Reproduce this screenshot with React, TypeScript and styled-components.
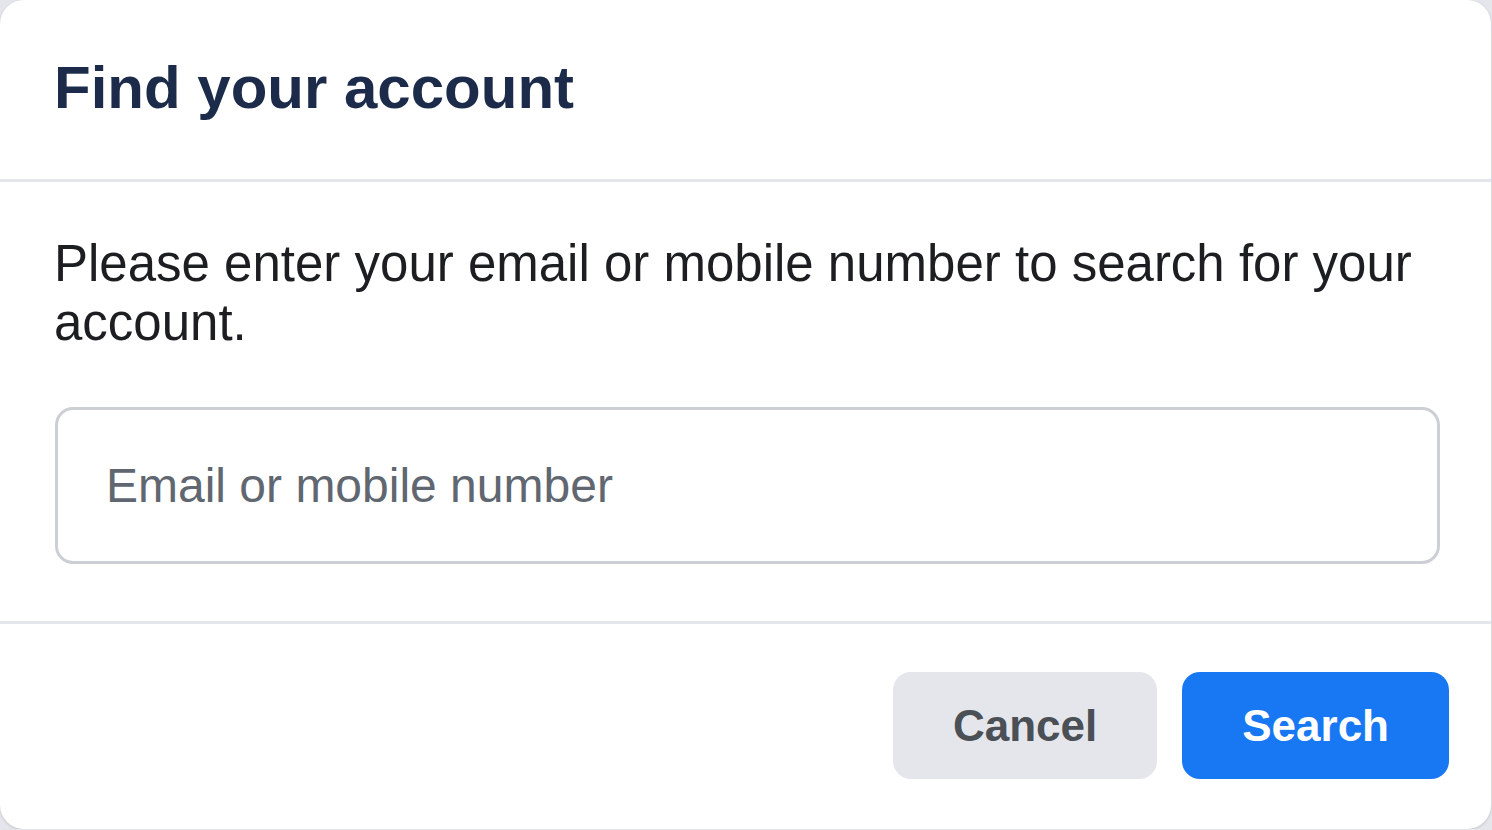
import React from "react";
import styled, { createGlobalStyle } from "styled-components";

const GlobalStyle = createGlobalStyle`
  html, body {
    margin: 0;
    padding: 0;
    background: #e4e6eb;
  }
  body {
    font-family: "Liberation Sans", Arial, Helvetica, sans-serif;
    -webkit-font-smoothing: antialiased;
  }
  * { box-sizing: border-box; }
`;

const Card = styled.div`
  width: 1491px;
  height: 829px;
  background: #ffffff;
  border-radius: 24px;
  box-shadow: 0 1px 3px rgba(0, 0, 0, 0.15);
  display: flex;
  flex-direction: column;
  overflow: hidden;
`;

const Header = styled.header`
  padding: 52px 51px 55px 54px;
  border-bottom: 3px solid #e4e6eb;
`;

const Title = styled.h2`
  margin: 0;
  font-size: 60px;
  line-height: 72px;
  font-weight: 700;
  color: #1c2b4a;
`;

const Body = styled.div`
  padding: 52px 51px 57px 54px;
  border-bottom: 3px solid #e4e6eb;
  display: flex;
  flex-direction: column;
  gap: 55px;
`;

const Description = styled.p`
  margin: 0;
  font-size: 51px;
  line-height: 59px;
  color: #1c1e21;
`;

const Input = styled.input`
  margin-left: 1px;
  height: 157px;
  border: 3px solid #ccd0d5;
  border-radius: 18px;
  padding: 0 48px;
  font-family: inherit;
  font-size: 48px;
  color: #1c1e21;
  outline: none;
  background: #ffffff;
  &::placeholder {
    color: #606770;
  }
`;

const Footer = styled.footer`
  padding: 48px 42px 49px;
  display: flex;
  justify-content: flex-end;
  gap: 25px;
`;

const Button = styled.button<{ $primary?: boolean }>`
  height: 107px;
  padding: 0 60px;
  border: none;
  border-radius: 18px;
  font-family: inherit;
  font-size: 44px;
  font-weight: 700;
  cursor: pointer;
  background: ${(p) => (p.$primary ? "#1877f2" : "#e4e6eb")};
  color: ${(p) => (p.$primary ? "#ffffff" : "#4b4f56")};
`;

export default function App() {
  return (
    <>
      <GlobalStyle />
      <Card>
        <Header>
          <Title>Find your account</Title>
        </Header>
        <Body>
          <Description>
            Please enter your email or mobile number to search for your account.
          </Description>
          <Input type="text" placeholder="Email or mobile number" />
        </Body>
        <Footer>
          <Button>Cancel</Button>
          <Button $primary>Search</Button>
        </Footer>
      </Card>
    </>
  );
}
